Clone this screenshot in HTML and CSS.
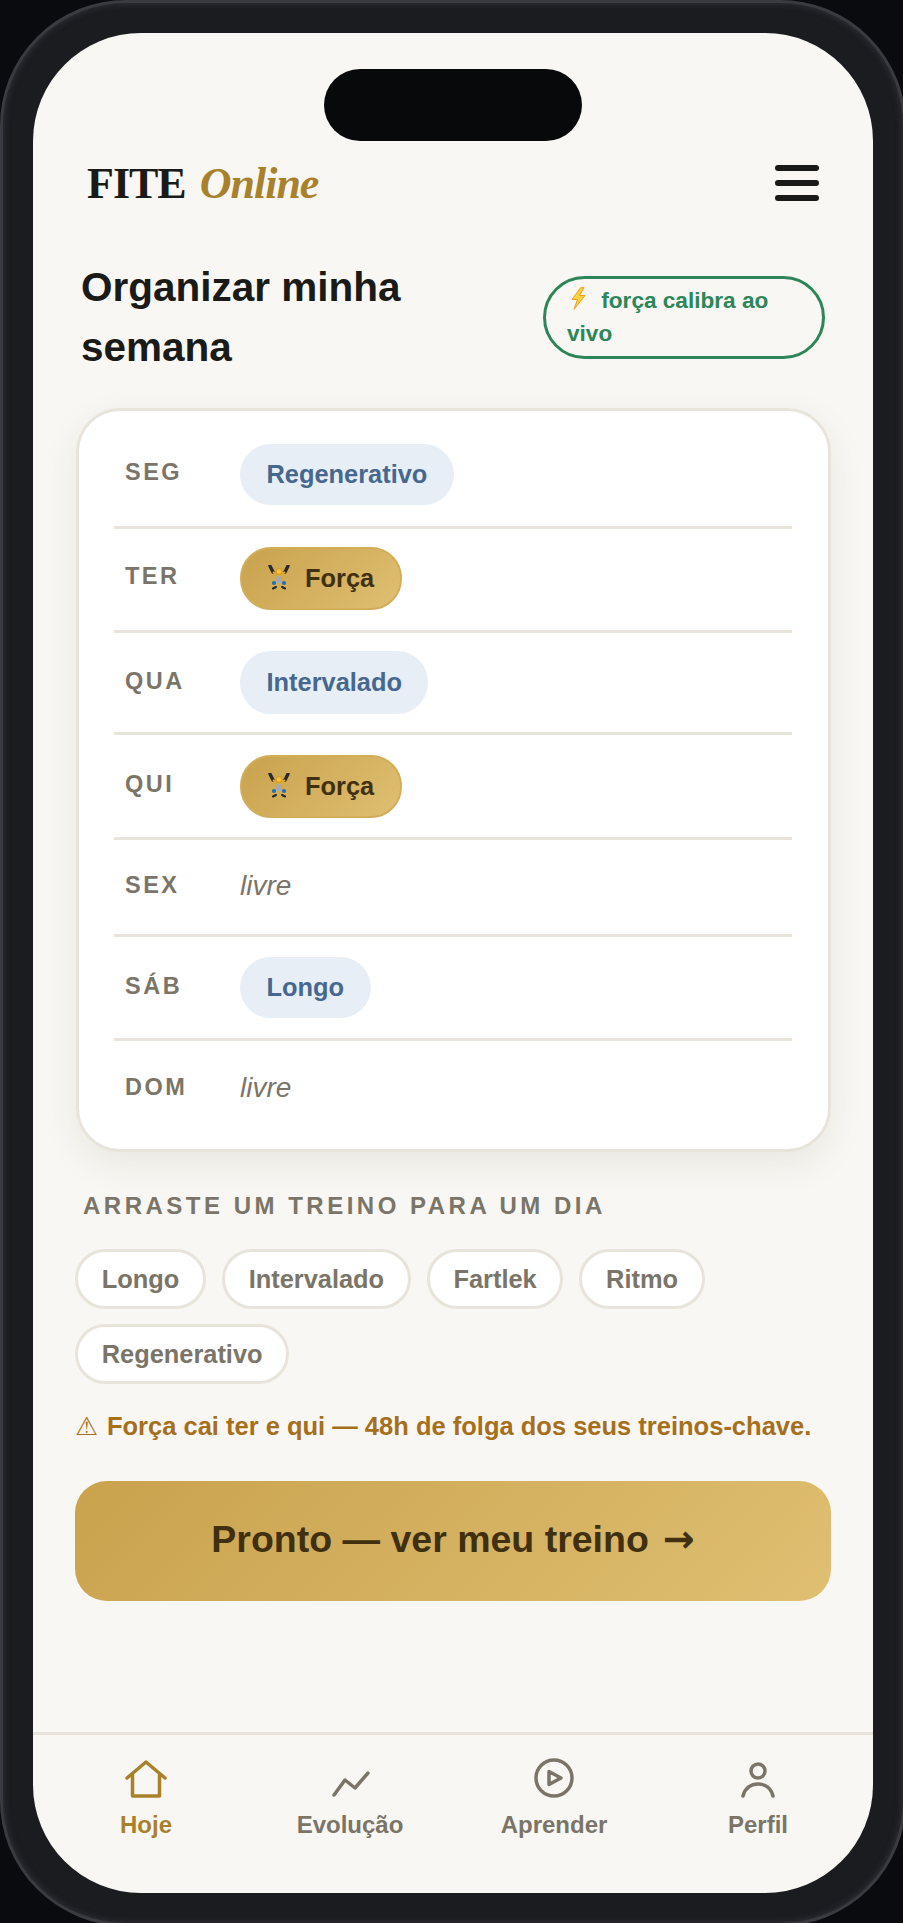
FILE: index.html
```html
<!DOCTYPE html>
<html lang="pt-BR">
<head>
    <meta charset="UTF-8">
    <meta name="viewport" content="width=device-width, initial-scale=1.0">
    <title>FITE Online - Organizar minha semana</title>
    <link rel="stylesheet" href="styles.css">
</head>
<body>

    <div class="device">
        <div class="screen">
            <div class="notch"></div>

            <header class="topbar">
                <div class="logo">FITE <em>Online</em></div>
                <div class="burger"><span></span><span></span><span></span></div>
            </header>

            <div class="title-row">
                <h1>Organizar minha semana</h1>
                <div class="live-badge">
                    <svg class="bolt" viewBox="0 0 15 23"><path d="M9.500 .7 L1 12.500 L6.500 12.500 L3 22.300 L14 8.500 L8.500 8.500 L13 .7 Z" fill="#ffd23f" stroke="#f59a1b" stroke-width="1" stroke-linejoin="round"/></svg>
                    força calibra ao vivo
                </div>
            </div>

            <section class="week">
                <div class="day">
                    <span class="day-name">SEG</span>
                    <span class="pill pill-run">Regenerativo</span>
                </div>
                <div class="day">
                    <span class="day-name">TER</span>
                    <span class="pill pill-gold">
                        <svg class="lifter" viewBox="0 0 24 26"><use href="#lifter-icon"/></svg>
                        Força
                    </span>
                </div>
                <div class="day">
                    <span class="day-name">QUA</span>
                    <span class="pill pill-run pill-tall">Intervalado</span>
                </div>
                <div class="day">
                    <span class="day-name">QUI</span>
                    <span class="pill pill-gold">
                        <svg class="lifter" viewBox="0 0 24 26"><use href="#lifter-icon"/></svg>
                        Força
                    </span>
                </div>
                <div class="day">
                    <span class="day-name">SEX</span>
                    <span class="free">livre</span>
                </div>
                <div class="day">
                    <span class="day-name">SÁB</span>
                    <span class="pill pill-run">Longo</span>
                </div>
                <div class="day">
                    <span class="day-name">DOM</span>
                    <span class="free">livre</span>
                </div>
            </section>

            <h2 class="tray-title">ARRASTE UM TREINO PARA UM DIA</h2>
            <div class="tray">
                <span class="chip">Longo</span>
                <span class="chip">Intervalado</span>
                <span class="chip">Fartlek</span>
                <span class="chip">Ritmo</span>
                <span class="chip">Regenerativo</span>
            </div>

            <p class="warning"><span class="warn-glyph">⚠</span> Força cai ter e qui — 48h de folga dos seus treinos-chave.</p>

            <a href="#" class="cta">Pronto — ver meu treino <span class="arrow">→</span></a>

            <nav class="tabs">
                <a href="#" class="tab tab-active">
                    <svg viewBox="0 0 42 42"><path d="M2 20 L21 4 L40 20 M7.500 16 V38 H34.500 V16"/></svg>
                    Hoje
                </a>
                <a href="#" class="tab">
                    <svg viewBox="0 0 42 42"><path d="M5 37 L16 22 L26 30 L39 15"/></svg>
                    Evolução
                </a>
                <a href="#" class="tab">
                    <svg viewBox="0 0 42 42"><circle cx="21" cy="20" r="18"/><path d="M16 13.500 L28 20 L16 26.500 Z"/></svg>
                    Aprender
                </a>
                <a href="#" class="tab">
                    <svg viewBox="0 0 42 42"><circle cx="21" cy="13" r="7"/><path d="M6 38 C8 30 14 26 21 26 C28 26 34 30 36 38"/></svg>
                    Perfil
                </a>
            </nav>
        </div>
    </div>

    <svg class="defs" width="0" height="0">
        <symbol id="lifter-icon" viewBox="0 0 24 26">
            <path d="M3 1 L6 7 M21 1 L18 7" stroke="#2b2b30" stroke-width="3.400" stroke-linecap="round"/>
            <path d="M6 7 L10 10 M18 7 L14 10" stroke="#e5a823" stroke-width="2"/>
            <circle cx="12" cy="6.500" r="3" fill="#f3c23e" stroke="#d9931a"/>
            <rect x="9" y="11" width="6" height="7" fill="#a7a9ad"/>
            <circle cx="7" cy="18" r="2" fill="#1f6fb0"/>
            <circle cx="17" cy="18" r="2" fill="#1f6fb0"/>
            <path d="M8 15 L9 11 M16 15 L15 11" stroke="#e5a823" stroke-width="1.500"/>
            <path d="M6 23.500 L9 22 M18 23.500 L15 22" stroke="#24242a" stroke-width="2" stroke-linecap="round"/>
        </symbol>
    </svg>

</body>
</html>
```

FILE: styles.css
```css
* {
    margin: 0;
    padding: 0;
    box-sizing: border-box;
}

html, body {
    width: 903px;
    height: 1923px;
    overflow: hidden;
}

body {
    font-family: 'Liberation Sans', Arial, sans-serif;
    background: #0a0b0e;
    color: #1a1a18;
}

.defs {
    display: block;
}

.device {
    width: 906px;
    height: 1926px;
    padding: 30px;
    background: #1b1c20;
    border: 3px solid #3a3b40;
    border-radius: 126px;
    box-shadow: inset 0 0 6px 1px rgba(58, 59, 64, 0.7);
}

.screen {
    position: relative;
    display: flex;
    flex-direction: column;
    height: 100%;
    padding: 0 42px;
    background: #f8f7f3;
    border-radius: 108px;
    overflow: hidden;
}

.notch {
    position: absolute;
    top: 36px;
    left: 291px;
    width: 258px;
    height: 72px;
    background: #08090b;
    border-radius: 36px;
}

.topbar {
    display: flex;
    justify-content: space-between;
    align-items: center;
    margin-top: 123px;
    padding: 0 12px;
    height: 54px;
}

.logo {
    font-family: 'Liberation Serif', Georgia, serif;
    font-size: 44px;
    font-weight: 700;
    letter-spacing: -1px;
    word-spacing: 4px;
    color: #1a1a18;
}

.logo em {
    color: #a8812c;
}

.burger {
    display: flex;
    flex-direction: column;
    gap: 9px;
    width: 44px;
}

.burger span {
    height: 6px;
    background: #1a1a18;
    border-radius: 3px;
}

.title-row {
    display: flex;
    justify-content: space-between;
    align-items: center;
    margin-top: 47px;
    padding: 0 6px;
}

h1 {
    width: 350px;
    font-size: 40.500px;
    line-height: 60px;
    font-weight: 700;
}

.live-badge {
    width: 282px;
    padding: 5px 21px 6px;
    font-size: 22.600px;
    line-height: 33px;
    font-weight: 700;
    color: #2d8659;
    border: 3px solid #2d8659;
    border-radius: 42px;
}

.bolt {
    width: 15px;
    height: 23px;
    margin: 0 9px 0 4px;
    vertical-align: -2px;
}

.week {
    margin: 31px 0 0 1px;
    padding: 13px 36px 0 35px;
    height: 744px;
    background: #fff;
    border: 3px solid #e8e4dc;
    border-radius: 44px;
    box-shadow: 0 12px 36px rgba(60, 50, 30, 0.08);
}

.day {
    display: flex;
    align-items: center;
    height: 104px;
    border-bottom: 3px solid #e8e4dc;
}

.day:nth-child(1) {
    height: 105px;
    padding-bottom: 2px;
}

.day:nth-child(2) {
    padding-bottom: 3px;
}

.day:nth-child(3) {
    height: 102px;
}

.day:nth-child(4) {
    height: 105px;
}

.day:nth-child(5) {
    height: 97px;
}

.day:last-child {
    height: 96px;
    border-bottom: 0;
}

.day-name {
    width: 126px;
    padding-left: 11px;
    margin-top: -3px;
    font-size: 23.500px;
    font-weight: 700;
    letter-spacing: 2.500px;
    color: #7a7568;
}

.pill {
    display: inline-flex;
    align-items: center;
    gap: 14px;
    height: 61px;
    padding: 0 26.500px;
    font-size: 25.400px;
    font-weight: 700;
    border-radius: 31px;
}

.pill-run {
    background: #e8eef6;
    color: #46688f;
}

.pill-tall {
    height: 63px;
}

.pill-gold {
    height: 63px;
    padding: 0 26px 0 25px;
    color: #40300f;
    background: linear-gradient(135deg, #c9a24d, #dfbf72);
    border: 2px solid #d3ae5a;
}

.lifter {
    width: 24px;
    height: 26px;
}

.free {
    margin-top: -3px;
    font-size: 28px;
    font-style: italic;
    color: #7a7568;
}

.tray-title {
    margin: 40px 0 0 8px;
    font-size: 24px;
    font-weight: 700;
    letter-spacing: 3.500px;
    color: #7a7568;
}

.tray {
    display: flex;
    flex-wrap: wrap;
    gap: 15px 16px;
    margin-top: 29px;
}

.chip {
    display: flex;
    align-items: center;
    height: 60px;
    padding: 0 23.700px;
    font-size: 25.400px;
    font-weight: 700;
    color: #7a7568;
    background: #fff;
    border: 3px solid #e8e4dc;
    border-radius: 30px;
}

.warning {
    margin-top: 24px;
    font-size: 25.500px;
    line-height: 36px;
    font-weight: 700;
    color: #a66f1c;
}

.warn-glyph {
    margin-right: 2px;
    font-family: 'DejaVu Sans', sans-serif;
    font-weight: 400;
}

.cta {
    display: flex;
    justify-content: center;
    align-items: center;
    gap: 14px;
    height: 120px;
    margin-top: 37px;
    padding-bottom: 4px;
    font-size: 37.500px;
    font-weight: 700;
    color: #40300f;
    text-decoration: none;
    background: linear-gradient(135deg, #c9a24d, #dfbf72);
    border-radius: 32px;
}

.arrow {
    font-family: 'DejaVu Sans', sans-serif;
    font-size: 38px;
}

.tabs {
    display: grid;
    grid-template-columns: repeat(4, 1fr);
    position: absolute;
    left: 0;
    right: 0;
    top: 1699px;
    padding: 23px 13px 0 11px;
    height: 161px;
    border-top: 3px solid #e8e4dc;
}

.tab {
    display: flex;
    flex-direction: column;
    align-items: center;
    gap: 11px;
    font-size: 24px;
    font-weight: 700;
    color: #7a7568;
    text-decoration: none;
}

.tab svg {
    width: 42px;
    height: 42px;
    fill: none;
    stroke: currentColor;
    stroke-width: 3.500;
    stroke-linecap: round;
    stroke-linejoin: round;
}

.tab-active {
    color: #a8812c;
}
```
